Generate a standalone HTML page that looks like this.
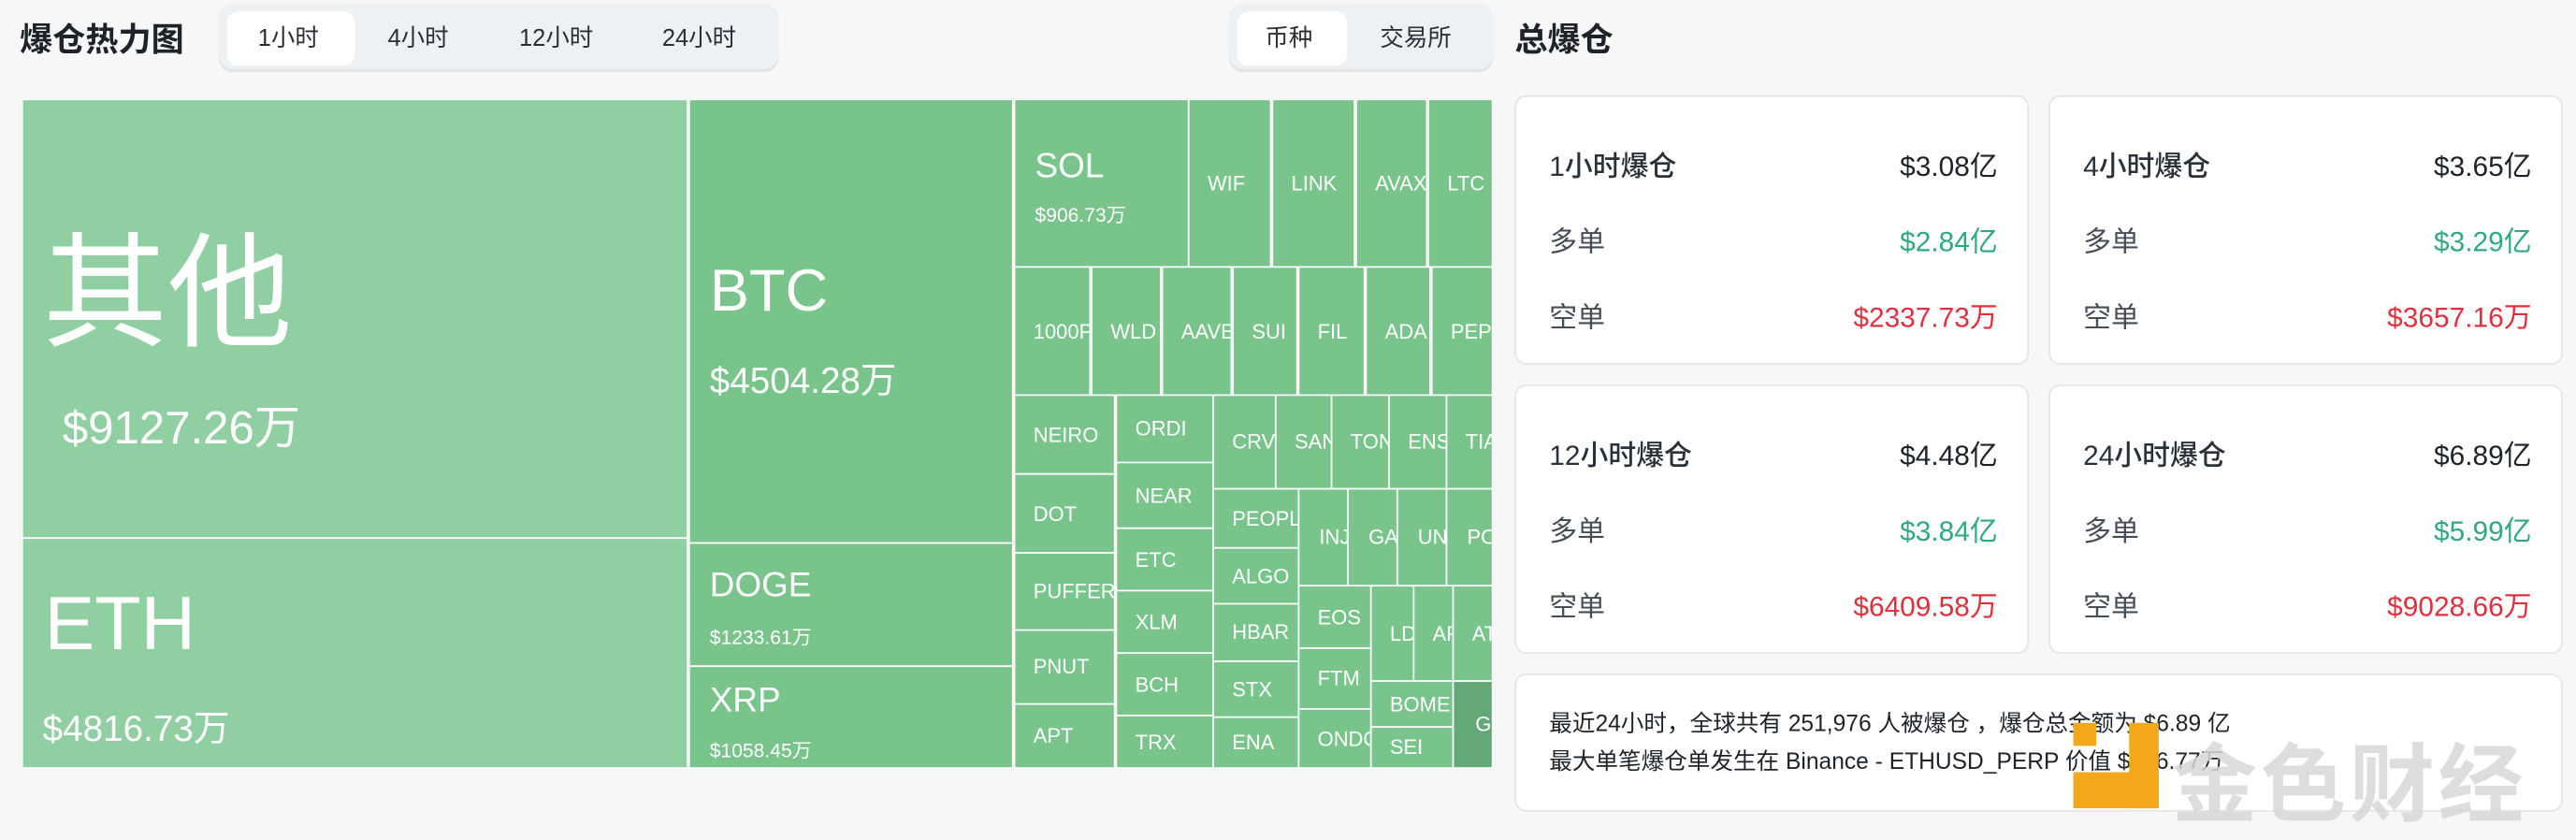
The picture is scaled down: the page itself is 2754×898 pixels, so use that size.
<!DOCTYPE html>
<html><head><meta charset="utf-8"><style>
html,body{margin:0;padding:0;background:#f7f7f7;width:2754px;height:880px;overflow:hidden}
#s{position:absolute;left:0;top:0;width:1568px;height:501px;transform:scale(1.75638);transform-origin:0 0;font-family:"Liberation Sans","Noto Sans CJK SC",sans-serif;color:#1e2329}
.a{position:absolute}
.c{position:absolute;background:#78c48b;box-sizing:border-box;border:0.6px solid #fff;color:#fff;overflow:hidden;white-space:nowrap;display:flex;align-items:center;padding-left:11px;font-size:12.5px}
.l{background:#90cfa2}
.tab{position:absolute;top:2px;height:40px;background:#eef1f4;border-radius:9px;box-shadow:0 2px 0 #e2e5e8}
.act{position:absolute;top:5px;height:33px;background:#fff;border-radius:7px}
.tt{position:absolute;top:12px;font-size:14.5px;color:#2b2f36}
.card{position:absolute;background:#fff;border:1px solid #e3e5e8;border-radius:7px;box-sizing:border-box}
.r{position:absolute;left:20px;right:18px;display:flex;justify-content:space-between;font-size:17px;color:#474d57}
.g{color:#2eaa7e}.rd{color:#e0303e}.b{color:#1e2329}
.h{color:#2b3139;font-weight:500}
</style></head><body><div id="s">
<div class="a" style="left:12px;top:8px;font-size:20px;font-weight:bold">爆仓热力图</div>
<div class="tab" style="left:133px;width:341px"><div class="act" style="left:5px;width:78px"></div></div>
<div class="tt" style="left:157px">1小时</div><div class="tt" style="left:236px">4小时</div><div class="tt" style="left:316px">12小时</div><div class="tt" style="left:403px">24小时</div>
<div class="tab" style="left:748px;width:161px"><div class="act" style="left:5px;width:67px"></div></div>
<div class="tt" style="left:770px">币种</div><div class="tt" style="left:840px">交易所</div>

<div class="c l" style="left:13px;top:60px;width:406px;height:268px;display:block;padding:0"><div class="a" style="left:12px;top:56px;font-size:76px">其他</div><div class="a" style="left:24px;top:178px;font-size:28px">$9127.26万</div></div>
<div class="c l" style="left:13px;top:327px;width:406px;height:141px;display:block;padding:0"><div class="a" style="left:13px;top:24px;font-size:46px">ETH</div><div class="a" style="left:12px;top:98px;font-size:22px">$4816.73万</div></div>
<div class="c" style="left:419px;top:60px;width:198px;height:271px;display:block;padding:0"><div class="a" style="left:12px;top:95px;font-size:36px">BTC</div><div class="a" style="left:12px;top:153px;font-size:22px">$4504.28万</div></div>
<div class="c" style="left:419px;top:330px;width:198px;height:76px;display:block;padding:0"><div class="a" style="left:12px;top:14px;font-size:21px">DOGE</div><div class="a" style="left:12px;top:48px;font-size:12px">$1233.61万</div></div>
<div class="c" style="left:419px;top:405px;width:198px;height:63px;display:block;padding:0"><div class="a" style="left:12px;top:9px;font-size:21px">XRP</div><div class="a" style="left:12px;top:42px;font-size:12px">$1058.45万</div></div>
<div class="c" style="left:617px;top:60px;width:107px;height:103px;display:block;padding:0"><div class="a" style="left:12px;top:29px;font-size:21px">SOL</div><div class="a" style="left:12px;top:61px;font-size:12px">$906.73万</div></div>
<div class="c" style="left:723px;top:60px;width:51px;height:103px">WIF</div>
<div class="c" style="left:774px;top:60px;width:51px;height:103px">LINK</div>
<div class="c" style="left:825px;top:60px;width:44px;height:103px">AVAX</div>
<div class="c" style="left:869px;top:60px;width:40px;height:103px">LTC</div>
<div class="c" style="left:617px;top:162px;width:47px;height:79px">1000PEPE</div>
<div class="c" style="left:664px;top:162px;width:43px;height:79px">WLD</div>
<div class="c" style="left:707px;top:162px;width:43px;height:79px">AAVE</div>
<div class="c" style="left:750px;top:162px;width:40px;height:79px">SUI</div>
<div class="c" style="left:790px;top:162px;width:41px;height:79px">FIL</div>
<div class="c" style="left:831px;top:162px;width:40px;height:79px">ADA</div>
<div class="c" style="left:871px;top:162px;width:38px;height:79px">PEPE</div>
<div class="c" style="left:617px;top:240px;width:62px;height:49px">NEIRO</div>
<div class="c" style="left:617px;top:288px;width:62px;height:49px">DOT</div>
<div class="c" style="left:617px;top:336px;width:62px;height:48px">PUFFER</div>
<div class="c" style="left:617px;top:383px;width:62px;height:46px">PNUT</div>
<div class="c" style="left:617px;top:428px;width:62px;height:40px">APT</div>
<div class="c" style="left:679px;top:240px;width:60px;height:42px">ORDI</div>
<div class="c" style="left:679px;top:281px;width:60px;height:41px">NEAR</div>
<div class="c" style="left:679px;top:321px;width:60px;height:39px">ETC</div>
<div class="c" style="left:679px;top:359px;width:60px;height:39px">XLM</div>
<div class="c" style="left:679px;top:397px;width:60px;height:39px">BCH</div>
<div class="c" style="left:679px;top:435px;width:60px;height:33px">TRX</div>
<div class="c" style="left:738px;top:240px;width:39px;height:58px">CRV</div>
<div class="c" style="left:776px;top:240px;width:35px;height:58px">SAND</div>
<div class="c" style="left:810px;top:240px;width:36px;height:58px">TON</div>
<div class="c" style="left:845px;top:240px;width:36px;height:58px">ENS</div>
<div class="c" style="left:880px;top:240px;width:29px;height:58px">TIA</div>
<div class="c" style="left:738px;top:297px;width:53px;height:37px">PEOPLE</div>
<div class="c" style="left:738px;top:333px;width:53px;height:35px">ALGO</div>
<div class="c" style="left:738px;top:367px;width:53px;height:36px">HBAR</div>
<div class="c" style="left:738px;top:402px;width:53px;height:35px">STX</div>
<div class="c" style="left:738px;top:436px;width:53px;height:32px">ENA</div>
<div class="c" style="left:790px;top:297px;width:31px;height:60px;padding-left:12px">INJ</div>
<div class="c" style="left:820px;top:297px;width:31px;height:60px;padding-left:12px">GALA</div>
<div class="c" style="left:850px;top:297px;width:31px;height:60px;padding-left:12px">UNI</div>
<div class="c" style="left:880px;top:297px;width:29px;height:60px;padding-left:12px">POL</div>
<div class="c" style="left:790px;top:356px;width:45px;height:39px">EOS</div>
<div class="c" style="left:790px;top:394px;width:45px;height:38px">FTM</div>
<div class="c" style="left:790px;top:431px;width:45px;height:37px">ONDO</div>
<div class="c" style="left:834px;top:356px;width:27px;height:59px">LDO</div>
<div class="c" style="left:860px;top:356px;width:25px;height:59px">AR</div>
<div class="c" style="left:884px;top:356px;width:25px;height:59px">ATOM</div>
<div class="c" style="left:834px;top:414px;width:51px;height:29px">BOME</div>
<div class="c" style="left:834px;top:442px;width:51px;height:26px">SEI</div>
<div class="c" style="left:884px;top:414px;width:25px;height:54px;background:#64a878;padding-left:13px">GOAT</div>

<div class="a" style="left:922px;top:8px;font-size:20px;font-weight:bold">总爆仓</div>
<div class="card" style="left:922px;top:58px;width:313px;height:164px"><div class="r" style="top:28px"><span class="h">1小时爆仓</span><span class="b">$3.08亿</span></div><div class="r" style="top:74px"><span>多单</span><span class="g">$2.84亿</span></div><div class="r" style="top:120px"><span>空单</span><span class="rd">$2337.73万</span></div></div>
<div class="card" style="left:1247px;top:58px;width:313px;height:164px"><div class="r" style="top:28px"><span class="h">4小时爆仓</span><span class="b">$3.65亿</span></div><div class="r" style="top:74px"><span>多单</span><span class="g">$3.29亿</span></div><div class="r" style="top:120px"><span>空单</span><span class="rd">$3657.16万</span></div></div>
<div class="card" style="left:922px;top:234px;width:313px;height:164px"><div class="r" style="top:28px"><span class="h">12小时爆仓</span><span class="b">$4.48亿</span></div><div class="r" style="top:74px"><span>多单</span><span class="g">$3.84亿</span></div><div class="r" style="top:120px"><span>空单</span><span class="rd">$6409.58万</span></div></div>
<div class="card" style="left:1247px;top:234px;width:313px;height:164px"><div class="r" style="top:28px"><span class="h">24小时爆仓</span><span class="b">$6.89亿</span></div><div class="r" style="top:74px"><span>多单</span><span class="g">$5.99亿</span></div><div class="r" style="top:120px"><span>空单</span><span class="rd">$9028.66万</span></div></div>
<div class="card" style="left:922px;top:410px;width:638px;height:84px"><div class="a" style="left:20px;top:18px;font-size:14px;line-height:23px;color:#1e2329">最近24小时，全球共有 251,976 人被爆仓 ，爆仓总金额为 $6.89 亿<br>最大单笔爆仓单发生在 Binance - ETHUSD_PERP 价值 $416.77万</div></div>
<div class="a" style="left:1262px;top:440px;width:14px;height:14px;background:#f3a81c"></div>
<div class="a" style="left:1262px;top:470px;width:52px;height:22px;background:#f3a81c"></div>
<div class="a" style="left:1296px;top:440px;width:18px;height:52px;background:#f3a81c"></div>
<div class="a" style="left:1322px;top:436px;font-size:52px;font-weight:bold;color:rgba(215,215,215,0.85);letter-spacing:2px">金色财经</div>
</div></body></html>
